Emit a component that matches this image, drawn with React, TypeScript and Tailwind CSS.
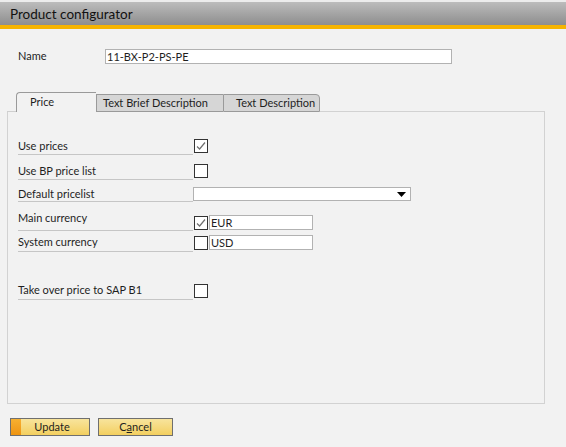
import React from 'react';

const font = { fontFamily: 'Lato, "Open Sans", sans-serif' };

const Check = () => (
  <svg width="12" height="12" viewBox="0 0 12 12" className="block">
    <path d="M2 6.5 L4.6 9 L10 2.5" fill="none" stroke="#707070" strokeWidth="1.2" />
  </svg>
);

const Box = ({ checked = false }: { checked?: boolean }) => (
  <div className="w-[14px] h-[14px] border border-[#333] bg-white flex items-center justify-center">
    {checked && <Check />}
  </div>
);

const Label = ({ text, h, pt }: { text: string; h: string; pt: string }) => (
  <div className={`w-[175px] ${h} ${pt} border-b border-[#c6c6c6] leading-[14px] whitespace-nowrap`}>{text}</div>
);

export default function App() {
  return (
    <div
      className="w-[566px] h-[447px] bg-[#f2f2f2] overflow-hidden text-[11px] text-[#1e1e1e]"
      style={font}
    >
      <div className="h-[2px] bg-[#ececec]" />
      <div className="h-[23px] bg-gradient-to-b from-[#bcbcbc] to-[#8e8e8e] pl-[10px] flex items-center text-[13.5px] text-[#111] pt-[1px]">
        Product configurator
      </div>
      <div className="h-[4px] bg-[#f6b400]" />

      {/* name */}
      <div className="flex items-center mt-[20px] h-[15px]">
        <div className="w-[105px] pl-[18px]">Name</div>
        <div className="w-[347px] h-[15px] border border-[#b2b2b2] bg-white pl-[1px] leading-[13px]">
          11-BX-P2-PS-PE
        </div>
      </div>

      {/* tabs */}
      <div className="flex items-end h-[20px] mt-[28px] whitespace-nowrap">
        <div className="w-[7px]" />
        <div className="w-[9px] h-[1px] bg-[#cfcfcf]" />
        <div className="w-[80px] h-[20px] border-t border-l border-[#9a9a9a] rounded-tl-[4px] bg-[#f2f2f2] pl-[13px] leading-[18px]">
          Price
        </div>
        <div className="w-[127px] h-[18px] border border-r-0 border-[#9a9a9a] bg-[#d6d6d6] pl-[6px] leading-[16px]">
          Text Brief Description
        </div>
        <div className="w-[97px] h-[18px] border border-[#9a9a9a] rounded-tr-[4px] bg-[#d6d6d6] pl-[12px] leading-[16px]">
          Text Description
        </div>
        <div className="w-[225px] h-[1px] bg-[#d2d2d2]" />
      </div>

      {/* panel */}
      <div className="ml-[7px] w-[538px] h-[292px] border-l border-r border-b border-[#d2d2d2] pl-[10px] pt-[27px]">
        <div className="flex">
          <Label text="Use prices" h="h-[16px]" pt="pt-0" />
          <div className="ml-[1px]"><Box checked /></div>
        </div>
        <div className="flex mt-[9px]">
          <Label text="Use BP price list" h="h-[16px]" pt="pt-0" />
          <div className="ml-[1px]"><Box /></div>
        </div>
        <div className="flex mt-[6px]">
          <Label text="Default pricelist" h="h-[16px]" pt="pt-[1px]" />
          <div className="mt-[1px] w-[218px] h-[14px] border border-[#b2b2b2] bg-white flex items-center justify-end pr-[4px]">
            <svg width="9" height="5" viewBox="0 0 9 5"><path d="M0 0 H9 L4.5 5 Z" fill="#000" /></svg>
          </div>
        </div>
        <div className="flex mt-[9px]">
          <Label text="Main currency" h="h-[20px]" pt="pt-0" />
          <div className="ml-[1px] mt-[5px]"><Box checked /></div>
          <div className="ml-[1px] mt-[4px] w-[104px] h-[15px] border border-[#b2b2b2] bg-white pl-[1px] leading-[13px]">EUR</div>
        </div>
        <div className="flex mt-[3px]">
          <Label text="System currency" h="h-[18px]" pt="pt-[1px]" />
          <div className="ml-[1px] mt-[2px]"><Box /></div>
          <div className="ml-[1px] mt-[1px] w-[104px] h-[15px] border border-[#b2b2b2] bg-white pl-[1px] leading-[13px]">USD</div>
        </div>
        <div className="flex mt-[31px]">
          <Label text="Take over price to SAP B1" h="h-[17px]" pt="pt-0" />
          <div className="ml-[1px] mt-[1px]"><Box /></div>
        </div>
      </div>

      {/* buttons */}
      <div className="flex mt-[14px] ml-[10px] gap-[8px]">
        <div className="relative w-[80px] h-[18px] border border-[#6f6f6f] bg-gradient-to-b from-[#f8e49c] to-[#f3cf5e] flex items-center justify-center leading-[16px]">
          <div className="absolute left-0 top-0 bottom-0 w-[10px] bg-gradient-to-b from-[#f6b030] to-[#ee9410]" />
          <span className="relative pl-[4px]">Update</span>
        </div>
        <div className="w-[75px] h-[18px] border border-[#6f6f6f] bg-gradient-to-b from-[#f8e49c] to-[#f3cf5e] flex items-center justify-center leading-[16px]">
          <span>C<span className="underline">a</span>ncel</span>
        </div>
      </div>
    </div>
  );
}
